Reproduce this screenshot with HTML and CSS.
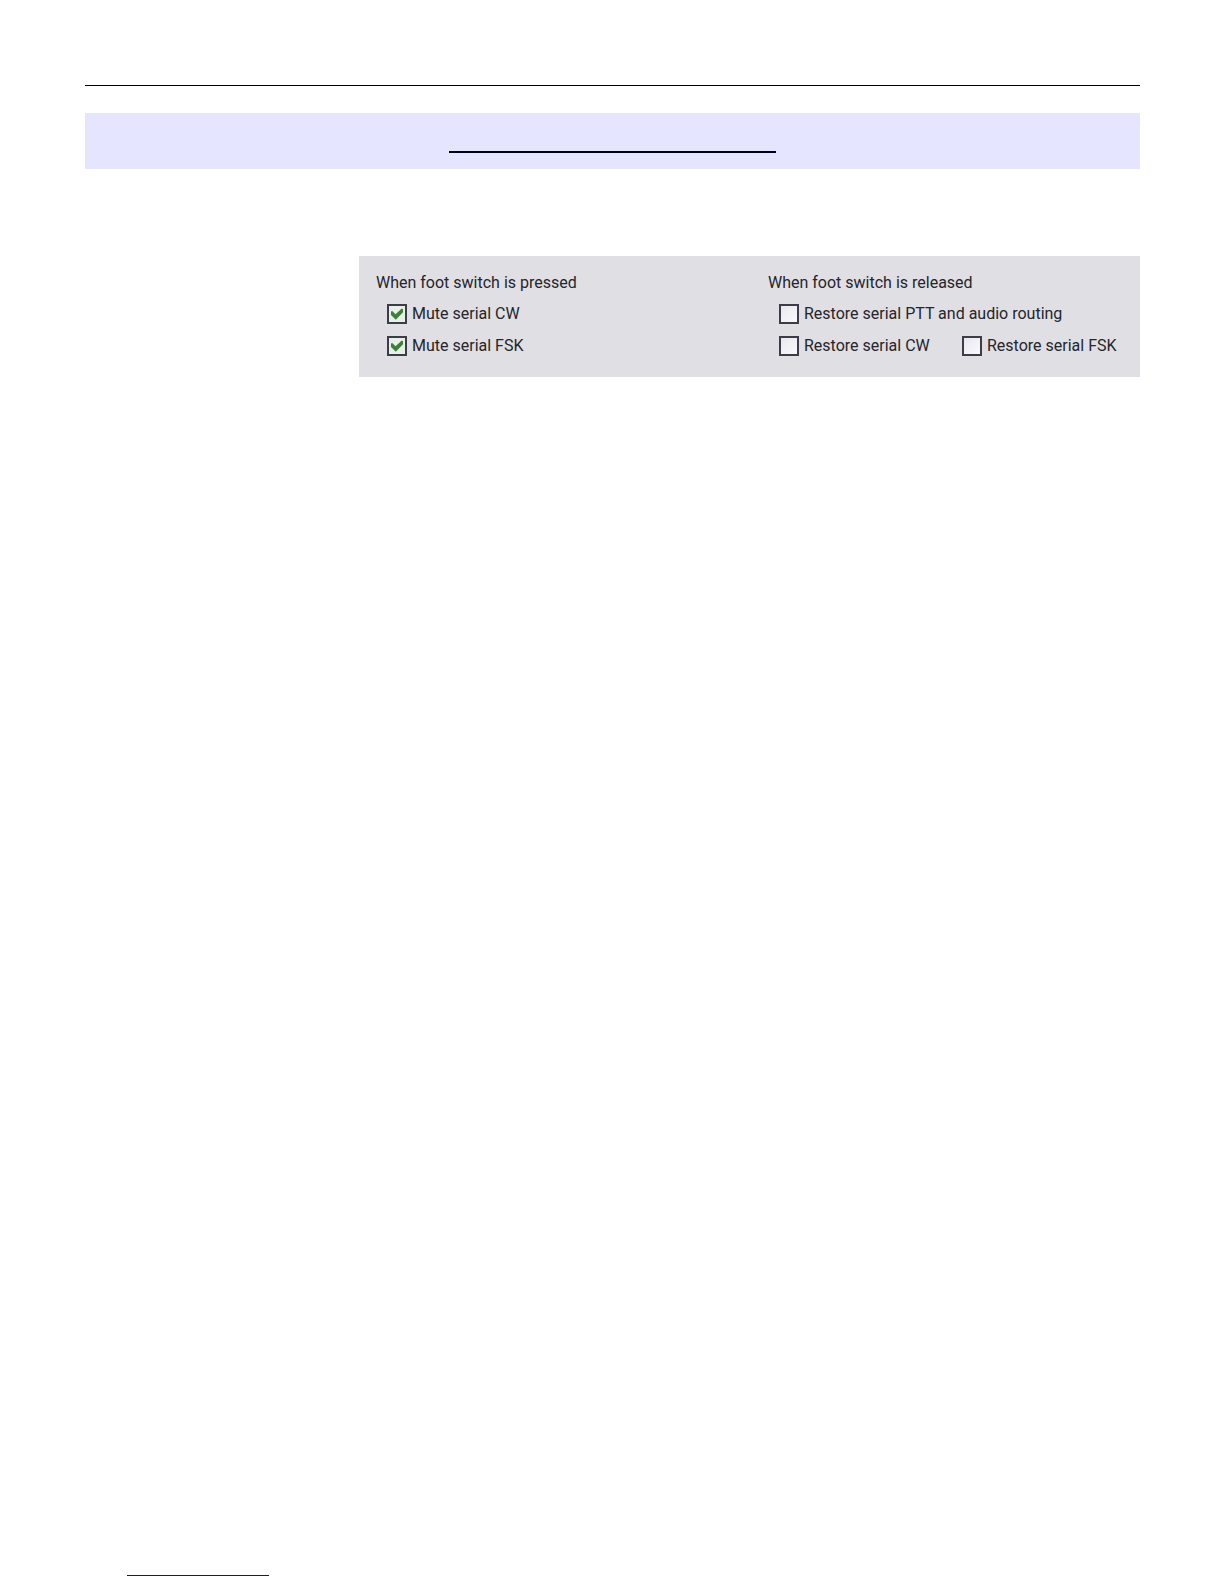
FILE: index.html
```html
<!DOCTYPE html>
<html lang="en">
<head>
<meta charset="utf-8">
<meta name="viewport" content="width=device-width, initial-scale=1">
<title>Foot switch</title>
<link rel="stylesheet" href="styles.css">
</head>
<body>
<header class="page-header"></header>
<main>
  <div class="banner"><div class="banner-line"></div></div>
  <form class="panel">
    <fieldset class="group">
      <legend class="group-title">When foot switch is pressed</legend>
      <div class="options">
        <div class="row">
          <label class="option"><input class="box" type="checkbox" checked>Mute serial CW</label>
        </div>
        <div class="row">
          <label class="option"><input class="box" type="checkbox" checked>Mute serial FSK</label>
        </div>
      </div>
    </fieldset>
    <fieldset class="group">
      <legend class="group-title">When foot switch is released</legend>
      <div class="options">
        <div class="row">
          <label class="option"><input class="box" type="checkbox">Restore serial PTT and audio routing</label>
        </div>
        <div class="row">
          <label class="option option-first"><input class="box" type="checkbox">Restore serial CW</label>
          <label class="option"><input class="box" type="checkbox">Restore serial FSK</label>
        </div>
      </div>
    </fieldset>
  </form>
</main>
<footer class="page-footer"><div class="footer-line"></div></footer>
</body>
</html>
```
FILE: styles.css
```css
* {
  box-sizing: border-box;
}

body {
  display: flex;
  flex-direction: column;
  min-height: 100vh;
  margin: 0;
  padding: 85px 84px 8px 85px;
  background: #fff;
  color: #25252b;
  font: 16px/20px Roboto, "Liberation Sans", sans-serif;
}

.page-header {
  margin-bottom: 27px;
  border-top: 1px solid #000;
}

.banner {
  display: flex;
  justify-content: center;
  height: 56px;
  margin-bottom: 87px;
  padding-top: 38px;
  background: #e5e5ff;
}

.banner-line {
  width: 31%;
  height: 2px;
  background: #000010;
}

.panel {
  display: grid;
  grid-template-columns: 1fr 1fr;
  gap: 20px;
  margin-left: 274px;
  padding: 17px 0 21px 17px;
  background: #e0dfe4;
}

.group {
  min-width: 0;
  margin: 0;
  padding: 0;
  border: 0;
}

.group-title {
  padding: 0;
  white-space: nowrap;
}

.options {
  display: flex;
  flex-direction: column;
  gap: 12px;
  padding: 11px 0 0 11px;
}

.row {
  display: flex;
}

.option {
  display: flex;
  align-items: center;
  gap: 5px;
  white-space: nowrap;
}

.option-first {
  width: 183px;
}

.box {
  position: relative;
  flex: none;
  width: 20px;
  height: 20px;
  margin: 0;
  appearance: none;
  border: 2px solid #3d3c49;
  background: linear-gradient(135deg, #e8e7ee, #fafafd);
}

.box:checked {
  background: #e4f1e4;
}

.box:checked::after {
  content: "";
  position: absolute;
  inset: 2px;
  background: #3a803a;
  clip-path: polygon(0 30%, 10% 25%, 38% 52%, 90% 5%, 100% 10%, 100% 35%, 40% 98%, 0 58%);
}

.page-footer {
  margin-top: auto;
  padding-left: 42px;
}

.footer-line {
  width: 142px;
  height: 1px;
  background: #101090;
}
```
